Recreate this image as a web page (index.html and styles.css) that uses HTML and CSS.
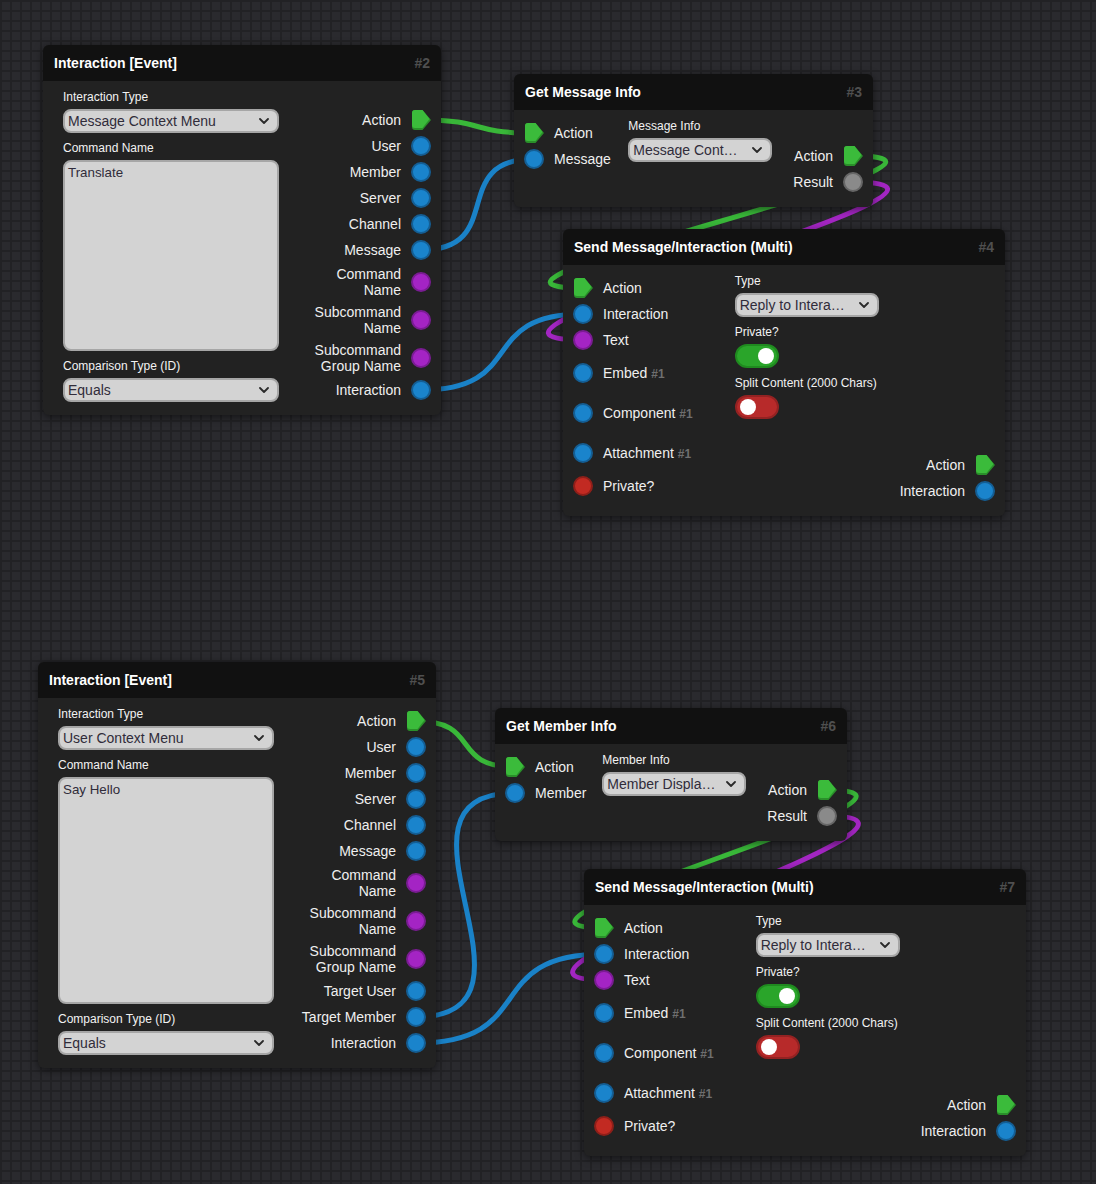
FILE: index.html
```html
<!DOCTYPE html>
<html lang="en">
<head>
  <meta charset="utf-8">
  <link rel="stylesheet" href="styles.css">
</head>
<body>
  <svg width="0" height="0" class="defs">
    <symbol id="action-socket" viewBox="0 0 20 20">
      <path d="M4 0H11.5L20 10L11.5 20H4A3 3 0 0 1 1 17V3A3 3 0 0 1 4 0Z" fill="#2a8f2a"/>
      <path d="M4 0H11.5L18.5 9L11.5 18H4A3 3 0 0 1 1 15V3A3 3 0 0 1 4 0Z" fill="#3bbb3b"/>
    </symbol>
    <symbol id="chevron" viewBox="0 0 10 6">
      <path d="M1 1L5 5L9 1" fill="none" stroke="#2a2a2a" stroke-width="1.8" stroke-linecap="round" stroke-linejoin="round"/>
    </symbol>
  </svg>

  <div class="canvas">
    <svg class="wires" width="1096" height="1184">
      <path class="wire green" data-from="n2-action-out" data-to="n3-action-in"></path>
      <path class="wire blue" data-from="n2-message-out" data-to="n3-message-in"></path>
      <path class="wire blue" data-from="n2-interaction-out" data-to="n4-interaction-in"></path>
      <path class="wire green" data-from="n3-action-out" data-to="n4-action-in"></path>
      <path class="wire purple" data-from="n3-result-out" data-to="n4-text-in"></path>
      <path class="wire green" data-from="n5-action-out" data-to="n6-action-in"></path>
      <path class="wire blue" data-from="n5-member-out" data-to="n6-member-in"></path>
      <path class="wire blue" data-from="n5-interaction-out" data-to="n7-interaction-in"></path>
      <path class="wire green" data-from="n6-action-out" data-to="n7-action-in"></path>
      <path class="wire purple" data-from="n6-result-out" data-to="n7-text-in"></path>
    </svg>

    <!-- Interaction [Event] #2 -->
    <div class="node node-2">
      <div class="node-header"><span>Interaction [Event]</span><span class="node-id">#2</span></div>
      <div class="node-body">
        <div class="controls controls-event">
          <div class="field">
            <div class="field-label">Interaction Type</div>
            <div class="select"><span>Message Context Menu</span><svg class="chevron"><use href="#chevron"/></svg></div>
          </div>
          <div class="field">
            <div class="field-label">Command Name</div>
            <div class="textarea textarea-short">Translate</div>
          </div>
          <div class="field">
            <div class="field-label">Comparison Type (ID)</div>
            <div class="select"><span>Equals</span><svg class="chevron"><use href="#chevron"/></svg></div>
          </div>
        </div>
        <div class="outputs">
          <div class="port"><span class="port-label">Action</span><svg class="socket-action" data-port="n2-action-out"><use href="#action-socket"/></svg></div>
          <div class="port"><span class="port-label">User</span><span class="socket blue"></span></div>
          <div class="port"><span class="port-label">Member</span><span class="socket blue"></span></div>
          <div class="port"><span class="port-label">Server</span><span class="socket blue"></span></div>
          <div class="port"><span class="port-label">Channel</span><span class="socket blue"></span></div>
          <div class="port"><span class="port-label">Message</span><span class="socket blue" data-port="n2-message-out"></span></div>
          <div class="port"><span class="port-label">Command<br>Name</span><span class="socket purple"></span></div>
          <div class="port"><span class="port-label">Subcommand<br>Name</span><span class="socket purple"></span></div>
          <div class="port"><span class="port-label">Subcommand<br>Group Name</span><span class="socket purple"></span></div>
          <div class="port"><span class="port-label">Interaction</span><span class="socket blue" data-port="n2-interaction-out"></span></div>
        </div>
      </div>
    </div>

    <!-- Get Message Info #3 -->
    <div class="node node-3">
      <div class="node-header"><span>Get Message Info</span><span class="node-id">#3</span></div>
      <div class="node-body">
        <div class="inputs">
          <div class="port"><svg class="socket-action" data-port="n3-action-in"><use href="#action-socket"/></svg><span class="port-label">Action</span></div>
          <div class="port"><span class="socket blue" data-port="n3-message-in"></span><span class="port-label">Message</span></div>
        </div>
        <div class="controls">
          <div class="field">
            <div class="field-label">Message Info</div>
            <div class="select"><span>Message Cont…</span><svg class="chevron"><use href="#chevron"/></svg></div>
          </div>
        </div>
        <div class="outputs">
          <div class="port"><span class="port-label">Action</span><svg class="socket-action" data-port="n3-action-out"><use href="#action-socket"/></svg></div>
          <div class="port"><span class="port-label">Result</span><span class="socket gray" data-port="n3-result-out"></span></div>
        </div>
      </div>
    </div>

    <!-- Send Message/Interaction (Multi) #4 -->
    <div class="node node-4">
      <div class="node-header"><span>Send Message/Interaction (Multi)</span><span class="node-id">#4</span></div>
      <div class="node-body">
        <div class="inputs">
          <div class="port"><svg class="socket-action" data-port="n4-action-in"><use href="#action-socket"/></svg><span class="port-label">Action</span></div>
          <div class="port"><span class="socket blue" data-port="n4-interaction-in"></span><span class="port-label">Interaction</span></div>
          <div class="port"><span class="socket purple" data-port="n4-text-in"></span><span class="port-label">Text</span></div>
          <div class="port port-multi"><span class="socket blue"></span><span class="port-label">Embed <span class="port-index">#1</span></span></div>
          <div class="port port-multi"><span class="socket blue"></span><span class="port-label">Component <span class="port-index">#1</span></span></div>
          <div class="port port-multi"><span class="socket blue"></span><span class="port-label">Attachment <span class="port-index">#1</span></span></div>
          <div class="port"><span class="socket red"></span><span class="port-label">Private?</span></div>
        </div>
        <div class="controls">
          <div class="field">
            <div class="field-label">Type</div>
            <div class="select"><span>Reply to Intera…</span><svg class="chevron"><use href="#chevron"/></svg></div>
          </div>
          <div class="field">
            <div class="field-label">Private?</div>
            <div class="toggle on"><span class="knob"></span></div>
          </div>
          <div class="field">
            <div class="field-label">Split Content (2000 Chars)</div>
            <div class="toggle off"><span class="knob"></span></div>
          </div>
        </div>
        <div class="outputs">
          <div class="port"><span class="port-label">Action</span><svg class="socket-action"><use href="#action-socket"/></svg></div>
          <div class="port"><span class="port-label">Interaction</span><span class="socket blue"></span></div>
        </div>
      </div>
    </div>

    <!-- Interaction [Event] #5 -->
    <div class="node node-5">
      <div class="node-header"><span>Interaction [Event]</span><span class="node-id">#5</span></div>
      <div class="node-body">
        <div class="controls controls-event">
          <div class="field">
            <div class="field-label">Interaction Type</div>
            <div class="select"><span>User Context Menu</span><svg class="chevron"><use href="#chevron"/></svg></div>
          </div>
          <div class="field">
            <div class="field-label">Command Name</div>
            <div class="textarea textarea-tall">Say Hello</div>
          </div>
          <div class="field">
            <div class="field-label">Comparison Type (ID)</div>
            <div class="select"><span>Equals</span><svg class="chevron"><use href="#chevron"/></svg></div>
          </div>
        </div>
        <div class="outputs">
          <div class="port"><span class="port-label">Action</span><svg class="socket-action" data-port="n5-action-out"><use href="#action-socket"/></svg></div>
          <div class="port"><span class="port-label">User</span><span class="socket blue"></span></div>
          <div class="port"><span class="port-label">Member</span><span class="socket blue"></span></div>
          <div class="port"><span class="port-label">Server</span><span class="socket blue"></span></div>
          <div class="port"><span class="port-label">Channel</span><span class="socket blue"></span></div>
          <div class="port"><span class="port-label">Message</span><span class="socket blue"></span></div>
          <div class="port"><span class="port-label">Command<br>Name</span><span class="socket purple"></span></div>
          <div class="port"><span class="port-label">Subcommand<br>Name</span><span class="socket purple"></span></div>
          <div class="port"><span class="port-label">Subcommand<br>Group Name</span><span class="socket purple"></span></div>
          <div class="port"><span class="port-label">Target User</span><span class="socket blue"></span></div>
          <div class="port"><span class="port-label">Target Member</span><span class="socket blue" data-port="n5-member-out"></span></div>
          <div class="port"><span class="port-label">Interaction</span><span class="socket blue" data-port="n5-interaction-out"></span></div>
        </div>
      </div>
    </div>

    <!-- Get Member Info #6 -->
    <div class="node node-6">
      <div class="node-header"><span>Get Member Info</span><span class="node-id">#6</span></div>
      <div class="node-body">
        <div class="inputs">
          <div class="port"><svg class="socket-action" data-port="n6-action-in"><use href="#action-socket"/></svg><span class="port-label">Action</span></div>
          <div class="port"><span class="socket blue" data-port="n6-member-in"></span><span class="port-label">Member</span></div>
        </div>
        <div class="controls">
          <div class="field">
            <div class="field-label">Member Info</div>
            <div class="select"><span>Member Displa…</span><svg class="chevron"><use href="#chevron"/></svg></div>
          </div>
        </div>
        <div class="outputs">
          <div class="port"><span class="port-label">Action</span><svg class="socket-action" data-port="n6-action-out"><use href="#action-socket"/></svg></div>
          <div class="port"><span class="port-label">Result</span><span class="socket gray" data-port="n6-result-out"></span></div>
        </div>
      </div>
    </div>

    <!-- Send Message/Interaction (Multi) #7 -->
    <div class="node node-7">
      <div class="node-header"><span>Send Message/Interaction (Multi)</span><span class="node-id">#7</span></div>
      <div class="node-body">
        <div class="inputs">
          <div class="port"><svg class="socket-action" data-port="n7-action-in"><use href="#action-socket"/></svg><span class="port-label">Action</span></div>
          <div class="port"><span class="socket blue" data-port="n7-interaction-in"></span><span class="port-label">Interaction</span></div>
          <div class="port"><span class="socket purple" data-port="n7-text-in"></span><span class="port-label">Text</span></div>
          <div class="port port-multi"><span class="socket blue"></span><span class="port-label">Embed <span class="port-index">#1</span></span></div>
          <div class="port port-multi"><span class="socket blue"></span><span class="port-label">Component <span class="port-index">#1</span></span></div>
          <div class="port port-multi"><span class="socket blue"></span><span class="port-label">Attachment <span class="port-index">#1</span></span></div>
          <div class="port"><span class="socket red"></span><span class="port-label">Private?</span></div>
        </div>
        <div class="controls">
          <div class="field">
            <div class="field-label">Type</div>
            <div class="select"><span>Reply to Intera…</span><svg class="chevron"><use href="#chevron"/></svg></div>
          </div>
          <div class="field">
            <div class="field-label">Private?</div>
            <div class="toggle on"><span class="knob"></span></div>
          </div>
          <div class="field">
            <div class="field-label">Split Content (2000 Chars)</div>
            <div class="toggle off"><span class="knob"></span></div>
          </div>
        </div>
        <div class="outputs">
          <div class="port"><span class="port-label">Action</span><svg class="socket-action"><use href="#action-socket"/></svg></div>
          <div class="port"><span class="port-label">Interaction</span><span class="socket blue"></span></div>
        </div>
      </div>
    </div>
  </div>

  <script>
    // Draw each connection as a bezier between the two socket centres
    function socketCenter(id) {
      const el = document.querySelector(`[data-port="${id}"]`);
      const r = el.getBoundingClientRect();
      return [r.left + r.width / 2, r.top + r.height / 2];
    }

    document.querySelectorAll('.wire').forEach(wire => {
      const [x1, y1] = socketCenter(wire.dataset.from);
      const [x2, y2] = socketCenter(wire.dataset.to);
      const bend = Math.hypot(x2 - x1, y2 - y1) * 0.6;
      wire.setAttribute('d', `M${x1} ${y1} C${x1 + bend} ${y1} ${x2 - bend} ${y2} ${x2} ${y2}`);
    });
  </script>
</body>
</html>
```

FILE: styles.css
```css
* {
    box-sizing: border-box;
}
body {
    margin: 0;
    width: 1096px;
    height: 1184px;
    overflow: hidden;
    background-color: #2a2a2e;
    background-image:
        linear-gradient(#222225 2px, transparent 2px),
        linear-gradient(90deg, #222225 2px, transparent 2px);
    background-size: 10px 10px;
    font-family: "Liberation Sans", Arial, sans-serif;
    color: #efefef;
}
.defs {
    position: absolute;
}
.canvas {
    position: relative;
    width: 1096px;
    height: 1184px;
}
.wires {
    position: absolute;
    left: 0;
    top: 0;
}
.wire {
    fill: none;
    stroke-width: 5;
    stroke-linecap: round;
}
.wire.green {
    stroke: #39b739;
}
.wire.blue {
    stroke: #1a82c8;
}
.wire.purple {
    stroke: #a326c2;
}

/* nodes sit on the free canvas */
.node {
    position: absolute;
    display: flex;
    flex-direction: column;
    background: #222222;
    border-radius: 6px;
    box-shadow: 0 2px 8px rgba(0, 0, 0, 0.55);
}
.node-2 { left: 43px; top: 45px; width: 398px; height: 370px; }
.node-3 { left: 514px; top: 74px; width: 359px; height: 133px; }
.node-4 { left: 563px; top: 229px; width: 442px; height: 287px; }
.node-5 { left: 38px; top: 662px; width: 398px; height: 406px; }
.node-6 { left: 495px; top: 708px; width: 352px; height: 133px; }
.node-7 { left: 584px; top: 869px; width: 442px; height: 287px; }

.node-header {
    height: 36px;
    flex: none;
    display: flex;
    align-items: center;
    justify-content: space-between;
    padding: 0 11px;
    background: #111111;
    border-radius: 6px 6px 0 0;
    font-size: 14px;
    font-weight: bold;
    color: #ffffff;
}
.node-id {
    color: #4f4f4f;
}
.node-body {
    flex: 1;
    min-height: 0;
    display: flex;
    align-items: flex-start;
    padding: 9px 10px 15px 10px;
}

/* ports */
.inputs {
    display: flex;
    flex-direction: column;
    gap: 6px;
    margin-top: 4px;
}
.outputs {
    align-self: flex-end;
    display: flex;
    flex-direction: column;
    align-items: flex-end;
    gap: 6px;
    text-align: right;
}
.port {
    display: flex;
    align-items: center;
    gap: 10px;
    min-height: 20px;
    font-size: 14px;
    line-height: 16px;
}
.port-multi {
    padding: 7px 0;
}
.port-index {
    font-size: 12px;
    font-weight: bold;
    color: #6f6f6f;
}
.socket {
    width: 20px;
    height: 20px;
    flex: none;
    border-radius: 50%;
    border: 2px solid;
}
.socket.blue {
    background: #1a84cc;
    border-color: #145e94;
}
.socket.purple {
    background: #a424c4;
    border-color: #7a1c93;
}
.socket.red {
    background: #c22a22;
    border-color: #8e1f19;
}
.socket.gray {
    background: #8a8a8a;
    border-color: #666666;
}
.socket-action {
    width: 20px;
    height: 20px;
    flex: none;
}

/* controls */
.controls {
    margin-left: auto;
    margin-right: 21px;
    width: 144px;
    display: flex;
    flex-direction: column;
    gap: 8px;
}
.controls-event {
    margin-left: 10px;
    margin-right: auto;
    width: 216px;
}
.field-label {
    font-size: 12px;
    line-height: 15px;
    margin-bottom: 4px;
    white-space: nowrap;
    color: #f2f2f2;
}
.select {
    height: 24px;
    display: flex;
    align-items: center;
    justify-content: space-between;
    padding: 0 8px 0 3px;
    background: #d3d3d3;
    border: 2px solid #a6a6a6;
    border-radius: 8px;
    font-size: 14px;
    color: #302c3a;
    white-space: nowrap;
}
.chevron {
    width: 10px;
    height: 6px;
    flex: none;
}
.textarea {
    padding: 3px 3px;
    background: #d3d3d3;
    border: 2px solid #a6a6a6;
    border-radius: 8px;
    font-size: 13.33px;
    line-height: 16px;
    color: #302c3a;
}
.textarea-short {
    height: 191px;
}
.textarea-tall {
    height: 227px;
}
.toggle {
    position: relative;
    width: 44px;
    height: 24px;
    border-radius: 12px;
    border: 2px solid;
}
.toggle.on {
    background: #2aa52a;
    border-color: #1f8a1f;
}
.toggle.off {
    background: #b72a2a;
    border-color: #932222;
}
.knob {
    position: absolute;
    top: 2px;
    width: 16px;
    height: 16px;
    border-radius: 50%;
    background: #ffffff;
}
.toggle.on .knob {
    right: 3px;
}
.toggle.off .knob {
    left: 3px;
}
```
